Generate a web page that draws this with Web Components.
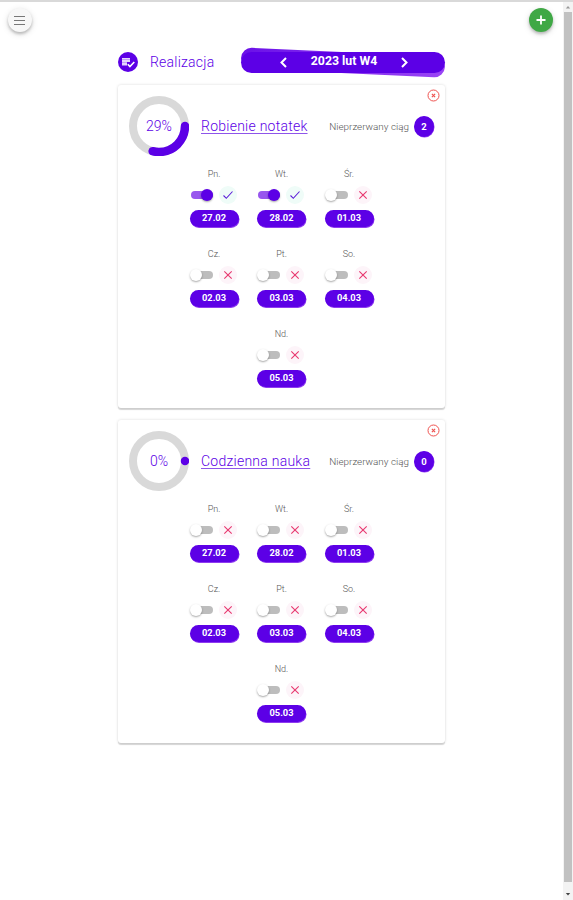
<!DOCTYPE html>
<html lang="pl">
<head>
<meta charset="utf-8">
<title>Realizacja</title>
<style>
  html, body {
    margin: 0;
    height: 100%;
    overflow: hidden;
    background: #fff;
  }
  body {
    --primary: #5c00e6;
    --primary-light: #8f3cf0;
    font-family: Roboto, "Noto Sans", sans-serif;
    color: #777;
  }
</style>
</head>
<body>
<habit-app>
  <round-button slot="menu" icon="menu"></round-button>
  <round-button slot="add" icon="add"></round-button>
  <page-header label="Realizacja" week="2023 lut W4"></page-header>
  <habit-card name="Robienie notatek" percent="29" streak="2" done="2"></habit-card>
  <habit-card name="Codzienna nauka" percent="0" streak="0" done="0"></habit-card>
</habit-app>

<script>
const DAYS = [
  ['Pn.', '27.02'],
  ['Wt.', '28.02'],
  ['Śr.', '01.03'],
  ['Cz.', '02.03'],
  ['Pt.', '03.03'],
  ['So.', '04.03'],
  ['Nd.', '05.03'],
];

class BaseElement extends HTMLElement {
  constructor() {
    super();
    this.attachShadow({ mode: 'open' });
  }

  connectedCallback() {
    this.shadowRoot.innerHTML = this.render();
  }
}

class HabitApp extends BaseElement {
  render() {
    return `
      <style>
        :host {
          display: flex;
          flex-direction: column;
          height: 100%;
          box-sizing: border-box;
          border-top: 2px solid #d9d9d9;
        }
        .row {
          display: flex;
          flex: 1;
          min-height: 0;
        }
        .page {
          flex: 1;
        }
        .bar {
          display: flex;
          justify-content: space-between;
          padding: 6px 10px 0 8px;
          height: 40px;
          box-sizing: border-box;
        }
        main {
          display: flex;
          flex-direction: column;
          gap: 12px;
          width: 327px;
          margin: 0 auto;
        }
      </style>
      <div class="row">
        <div class="page">
          <div class="bar">
            <slot name="menu"></slot>
            <slot name="add"></slot>
          </div>
          <main><slot></slot></main>
        </div>
        <scroll-track></scroll-track>
      </div>`;
  }
}

class ScrollTrack extends BaseElement {
  render() {
    return `
      <style>
        :host {
          display: flex;
          flex-direction: column;
          align-items: center;
          width: 10px;
          background: #f3f3f3;
        }
        svg {
          display: block;
          width: 10px;
          height: 10px;
        }
        .thumb {
          width: 8px;
          height: 870px;
          background: #c1c1c1;
          margin-bottom: 7px;
        }
      </style>
      <svg viewBox="0 0 10 10"><path d="M2.8 6.5h4.4L5 4z" fill="#999"/></svg>
      <div class="thumb"></div>
      <svg viewBox="0 0 10 10"><path d="M2.8 4h4.4L5 6.5z" fill="#444"/></svg>`;
  }
}

class RoundButton extends BaseElement {
  render() {
    const add = this.getAttribute('icon') === 'add';
    const path = add ? 'M12 7.5v9M7.5 12h9' : 'M6 8.5h11M6 12.5h11M6 16.5h11';
    return `
      <style>
        :host {
          display: block;
          width: 24px;
          height: 24px;
          border-radius: 50%;
          background: ${add ? '#3fa845' : '#f7f7f7'};
          box-shadow: 0 2px 3px rgba(0, 0, 0, .22), 0 2px 7px rgba(0, 0, 0, .12);
        }
        svg { display: block; }
      </style>
      <svg width="24" height="24" fill="none" stroke="${add ? '#fff' : '#777'}" stroke-width="${add ? 1.8 : 1.1}">
        <path d="${path}"/>
      </svg>`;
  }
}

class PageHeader extends BaseElement {
  render() {
    return `
      <style>
        :host {
          position: relative;
          z-index: 0;
          display: flex;
          align-items: center;
          box-sizing: border-box;
          height: 31px;
          padding-top: 9px;
          color: var(--primary);
        }
        .icon { display: block; }
        .label {
          margin-left: 12px;
          flex: 1;
          font-size: 14px;
          font-weight: 300;
          letter-spacing: .22px;
        }
        .week {
          position: relative;
          display: flex;
          align-items: center;
          justify-content: space-between;
          width: 204px;
          height: 21px;
          box-sizing: border-box;
          padding: 0 36px 0 38px;
          border-radius: 11px;
          color: #fff;
          font-size: 12.3px;
          font-weight: 700;
        }
        .week::before,
        .week::after {
          content: "";
          position: absolute;
          inset: 0;
          z-index: -1;
          border-radius: 11px;
          background: var(--primary);
        }
        .week::before {
          background: linear-gradient(90deg, #6a10e8, #9a45f5);
          transform: rotate(2.6deg);
        }
        .week span {
          position: relative;
          top: -1px;
        }
      </style>
      <svg class="icon" width="20" height="20" viewBox="0 0 20 20">
        <circle cx="10" cy="10" r="10" fill="var(--primary)"/>
        <path d="M4 6.8h8M4 9h8M4 11.2h5M4 12.7h5" stroke="#e5d8fb" stroke-width="1.8"/>
        <path d="M9.8 12.2l2.1 2.3 4.4-4.5" fill="none" stroke="#fff" stroke-width="1.6"/>
      </svg>
      <div class="label">${this.getAttribute('label')}</div>
      <div class="week">
        <svg width="9" height="11" fill="none" stroke="#fff" stroke-width="2"><path d="M7 1L2.5 5.5 7 10"/></svg>
        <span>${this.getAttribute('week')}</span>
        <svg width="9" height="11" fill="none" stroke="#fff" stroke-width="2"><path d="M2 1l4.5 4.5L2 10"/></svg>
      </div>`;
  }
}

class ProgressRing extends BaseElement {
  render() {
    const percent = Number(this.getAttribute('percent'));
    return `
      <style>
        :host {
          display: grid;
          place-items: center;
          width: 60px;
          height: 60px;
          color: var(--primary);
          font-size: 14px;
          font-weight: 300;
        }
        svg, span { grid-area: 1 / 1; }
      </style>
      <svg width="60" height="60" fill="none" stroke-width="8">
        <circle cx="30" cy="30" r="26" stroke="#d9d9d9"/>
        <circle cx="30" cy="30" r="26" stroke="var(--primary)" stroke-width="8.5" stroke-linecap="round"
          pathLength="100" stroke-dasharray="${percent || 0.01} 200"/>
      </svg>
      <span>${percent}%</span>`;
  }
}

class DayToggle extends BaseElement {
  render() {
    const on = this.hasAttribute('on');
    const mark = on ? 'M4.5 9.5l2.8 2.8L13.5 5.5' : 'M5.3 5.3l7.4 7.4M12.7 5.3l-7.4 7.4';
    return `
      <style>
        :host {
          display: flex;
          flex-direction: column;
          align-items: center;
          width: 49px;
          height: 80px;
        }
        .name {
          font-size: 9px;
          font-weight: 300;
          line-height: 12px;
          height: 12px;
          color: #555;
        }
        .controls {
          display: flex;
          align-items: center;
          justify-content: space-between;
          width: 46px;
          height: 18px;
          margin: 6px 1px 0 0;
        }
        .switch {
          display: flex;
          align-items: center;
          justify-content: ${on ? 'flex-end' : 'flex-start'};
          width: 22px;
          height: 8px;
          border-radius: 4px;
          background: ${on ? '#9857ee' : 'linear-gradient(90deg, transparent 4px, #bdbdbd 4px)'};
        }
        .knob {
          width: 12px;
          height: 12px;
          border-radius: 50%;
          background: ${on ? 'var(--primary)' : '#fff'};
          box-shadow: 0 1px 2px rgba(0, 0, 0, .35);
        }
        .off { margin-left: -1px; }
        .mark {
          border-radius: 50%;
          background: ${on ? '#effcf8' : '#fdf4f9'};
        }
        .date {
          position: relative;
          width: 49px;
          height: 17px;
          margin-top: 6px;
          border-radius: 9px;
          background: var(--primary);
          box-shadow: .5px 1px 0 var(--primary-light);
          color: #fff;
          font-size: 9.3px;
          font-weight: 700;
          line-height: 16.5px;
          text-align: center;
        }
      </style>
      <div class="name">${this.getAttribute('name')}</div>
      <div class="controls">
        <div class="switch"><div class="knob ${on ? 'on' : 'off'}"></div></div>
        <svg class="mark" width="18" height="18" fill="none" stroke="${on ? '#5c1fd8' : '#e8386f'}" stroke-width="1.1">
          <path d="${mark}"/>
        </svg>
      </div>
      <div class="date">${this.getAttribute('date')}</div>`;
  }
}

class HabitCard extends BaseElement {
  render() {
    const done = Number(this.getAttribute('done'));
    const days = DAYS.map(([name, date], i) =>
      `<day-toggle name="${name}" date="${date}" ${i < done ? 'on' : ''}></day-toggle>`
    ).join('');

    return `
      <style>
        :host {
          position: relative;
          display: block;
          box-sizing: border-box;
          height: 323px;
          border-radius: 3px;
          background: #fff;
          box-shadow: 0 2px 1px rgba(0, 0, 0, .15), 0 0 3px rgba(0, 0, 0, .15);
        }
        .head {
          display: flex;
          align-items: center;
          padding: 11px 11px 0;
        }
        a {
          flex: 1;
          margin-left: 12px;
          color: var(--primary);
          font-size: 14px;
          font-weight: 300;
          letter-spacing: .25px;
          text-decoration: underline;
          text-decoration-color: #8e55ea;
          text-decoration-thickness: 1px;
          text-underline-offset: 2px;
        }
        .streak {
          font-size: 9.9px;
          font-weight: 300;
          color: #555;
        }
        .count {
          width: 20px;
          height: 21px;
          margin-left: 5px;
          border-radius: 50%;
          background: var(--primary);
          box-shadow: .5px .5px 0 var(--primary-light);
          color: #fff;
          font-size: 9.5px;
          font-weight: 700;
          line-height: 21px;
          text-align: center;
        }
        .remove {
          position: absolute;
          top: 4px;
          right: 5px;
        }
        .days {
          display: flex;
          flex-wrap: wrap;
          justify-content: center;
          column-gap: 18.5px;
          width: 190px;
          margin: 12px auto 0;
        }
      </style>
      <svg class="remove" width="13" height="13" fill="none" stroke="#ef5350">
        <circle cx="6.5" cy="6.5" r="5.5"/>
        <path d="M4.9 4.9l3.2 3.2M8.1 4.9L4.9 8.1" stroke-width="1.2"/>
      </svg>
      <div class="head">
        <progress-ring percent="${this.getAttribute('percent')}"></progress-ring>
        <a>${this.getAttribute('name')}</a>
        <span class="streak">Nieprzerwany ciąg</span>
        <span class="count">${this.getAttribute('streak')}</span>
      </div>
      <div class="days">${days}</div>`;
  }
}

customElements.define('scroll-track', ScrollTrack);
customElements.define('round-button', RoundButton);
customElements.define('page-header', PageHeader);
customElements.define('progress-ring', ProgressRing);
customElements.define('day-toggle', DayToggle);
customElements.define('habit-card', HabitCard);
customElements.define('habit-app', HabitApp);
</script>
</body>
</html>
